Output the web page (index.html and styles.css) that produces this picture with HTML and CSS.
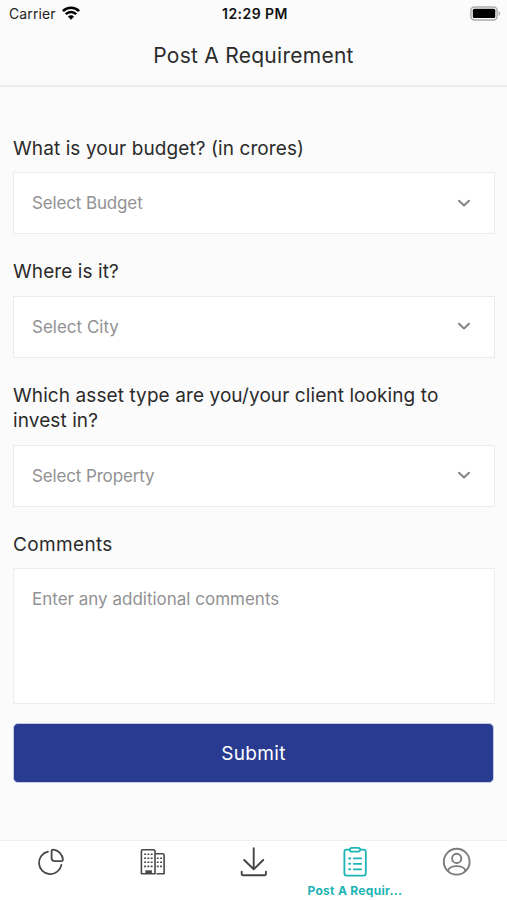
FILE: index.html
```html
<!DOCTYPE html>
<html lang="en">
<head>
<meta charset="utf-8">
<title>Post A Requirement</title>
<link rel="stylesheet" href="styles.css">
</head>
<body>
<div class="status">
  <div class="carrier"><span>Carrier</span>
    <svg width="18" height="14" viewBox="0 0 18 14"><g fill="none" stroke="#000" stroke-width="2.6"><path d="M.9 5.1a11.5 11.5 0 0 1 16.2 0"/><path d="M3.8 8.2a7.4 7.4 0 0 1 10.4 0"/></g><path d="M9 13.7 5.9 10.6a4.4 4.4 0 0 1 6.2 0z"/></svg>
  </div>
  <time class="clock">12:29 PM</time>
  <svg class="battery" width="31" height="15" viewBox="0 0 31 15"><rect x=".9" y=".9" width="26.2" height="13" rx="3.6" fill="#fff" stroke="#aaa" stroke-width="1.5"/><rect x="2.8" y="2.8" width="22.5" height="9.2" rx="1.5"/><path d="M28.6 5c2 .8 2 4 0 4.8z" fill="#aaa"/></svg>
</div>
<header class="header"><h1>Post A Requirement</h1></header>
<main class="form">
  <section class="field">
    <label>What is your budget? (in crores)</label>
    <div class="select"><span class="tight">Select Budget</span><svg width="14" height="9" viewBox="0 0 14 9"><path d="m2 1.7 5 4.8 5-4.8"/></svg></div>
  </section>
  <section class="field">
    <label>Where is it?</label>
    <div class="select"><span>Select City</span><svg width="14" height="9" viewBox="0 0 14 9"><path d="m2 1.7 5 4.8 5-4.8"/></svg></div>
  </section>
  <section class="field">
    <label>Which asset type are you/your client looking to<br>invest in?</label>
    <div class="select"><span class="tight">Select Property</span><svg width="14" height="9" viewBox="0 0 14 9"><path d="m2 1.7 5 4.8 5-4.8"/></svg></div>
  </section>
  <section class="field">
    <label class="wide">Comments</label>
    <div class="comments"><span>Enter any additional comments</span></div>
  </section>
  <button class="submit" type="button">Submit</button>
</main>
<nav class="tabs">
  <a class="tab"><svg width="30" height="32" viewBox="0 0 30 32"><g fill="none" stroke="#484848" stroke-width="1.8" stroke-linecap="round" stroke-linejoin="round"><path d="M12 5.7A11.3 11.3 0 1 0 25.4 18.8"/><path d="M15.6 5.2q0-1.6 1.6-1.5a10.7 10.7 0 0 1 9.7 9.8q.1 1.7-1.5 1.7h-6.6q-3.2 0-3.2-3.2z"/></g></svg></a>
  <a class="tab"><svg width="30" height="32" viewBox="0 0 30 32"><g fill="none" stroke="#484848" stroke-width="1.6" stroke-linejoin="round"><path d="M4.4 27.7V5.1q0-1.4 1.4-1.4h10.8q1.4 0 1.4 1.4v22.6z"/><path d="M18.4 7.8h7.3q1.4 0 1.4 1.4v18.5h-7.6"/><path d="M7.1 8.2h8.6M7.1 12.3h8.6M7.1 16.3h8.6M7.1 20.4h8.6M19.8 12.3H25M19.8 16.3H25M19.8 20.4H25" stroke-dasharray="1.9 1.4"/></g><path d="M8.4 24.3h6.5v3H8.4z" fill="#484848"/></svg></a>
  <a class="tab"><svg width="30" height="32" viewBox="0 0 30 32"><g fill="none" stroke="#444" stroke-width="1.9" stroke-linecap="round" stroke-linejoin="round"><path d="M15.7 2.3v21M6.2 14l9.5 9.3 9.5-9.3M3.7 25.8v2.1q0 1.4 1.4 1.4h21.4q1.4 0 1.4-1.4v-2.1"/></g></svg></a>
  <a class="tab active"><svg width="30" height="32" viewBox="0 0 30 32"><g fill="none" stroke="#1db4b5" stroke-width="1.8" stroke-linecap="round" stroke-linejoin="round"><path d="M9.5 3.7H6.6Q4.4 3.7 4.4 6v21.2q0 2.4 2.4 2.4h16.6q2.4 0 2.4-2.4V6q0-2.3-2.4-2.3h-2.9"/><rect x="9.8" y="1.9" width="10.4" height="3.8" rx="1.9"/><path d="M13.8 12.4h7.4M13.8 17.8h7.4M13.8 23.3h7.4"/><path d="M9.3 12.4h.8M9.3 17.8h.8M9.3 23.3h.8" stroke-width="2.1"/></g></svg><span class="tab-label">Post A Requir...</span></a>
  <a class="tab"><svg width="30" height="32" viewBox="0 0 30 32"><g fill="none" stroke="#7c7c7c" stroke-width="1.9"><circle cx="15.7" cy="15.7" r="12.9"/><circle cx="15.7" cy="12.4" r="4.6"/><path d="M7 25c1-6.5 16.4-6.5 17.4 0"/></g></svg></a>
</nav>
</body>
</html>
```
FILE: styles.css
```css
* { box-sizing: border-box; }
body { margin: 0; height: 900px; background: #fbfbfb; color: #2b2b2b; font-family: Inter, "Liberation Sans", sans-serif; display: flex; flex-direction: column; overflow: hidden; }
svg { display: block; flex: none; }
.status { height: 28px; padding: 0 6px 1px 9px; display: grid; grid-template-columns: 1fr auto 1fr; align-items: center; color: #222; }
.carrier { display: flex; align-items: center; gap: 6px; font-size: 14px; letter-spacing: .1px; }
.carrier svg { margin-top: -1px; }
.clock { font-size: 14px; font-weight: 600; letter-spacing: .45px; color: #111; }
.battery { justify-self: end; margin-top: -1px; }
.header { height: 59px; border-bottom: 2px solid #ebebeb; display: flex; justify-content: center; align-items: flex-start; }
h1 { margin: 0; padding-top: 13px; font-size: 21px; line-height: 30px; font-weight: 400; letter-spacing: .27px; white-space: nowrap; }
.form { flex: 1; padding: 47.8px 12.5px 0; }
.field { margin-bottom: 24px; }
label { display: block; padding: 1px 0 0 .5px; margin-bottom: 11px; font-size: 19px; line-height: 25.5px; letter-spacing: .09px; white-space: nowrap; }
.wide { letter-spacing: .35px; }
.tight { letter-spacing: -.14px; }
.select { height: 62px; border: 1.5px solid #ececec; background: #fff; padding: 0 22.5px 0 18.5px; display: flex; align-items: center; justify-content: space-between; color: #929294; font-size: 17px; }
.select path { fill: none; stroke: #858585; stroke-width: 2; stroke-linecap: round; stroke-linejoin: round; }
.comments { height: 135.5px; border: 1.5px solid #eee; background: #fff; padding: 18px 18.5px; color: #929294; font-size: 17px; line-height: 24px; }
.submit { display: block; width: 481px; height: 60px; margin: -4.8px 0 0 .5px; padding: 0; border: 1px solid #c5cbe4; border-radius: 5px; background: #283b91; color: #fff; font: 400 19px Inter, sans-serif; letter-spacing: .3px; }
.tabs { height: 60px; background: #fff; border-top: 1px solid #f0f0f0; display: grid; grid-template-columns: repeat(5, 1fr); }
.tab { display: flex; flex-direction: column; align-items: center; padding-top: 5px; }
.tab-label { font-size: 12px; font-weight: 700; line-height: 16px; margin-top: 5px; color: #1db4b5; white-space: nowrap; letter-spacing: .3px; }
```
